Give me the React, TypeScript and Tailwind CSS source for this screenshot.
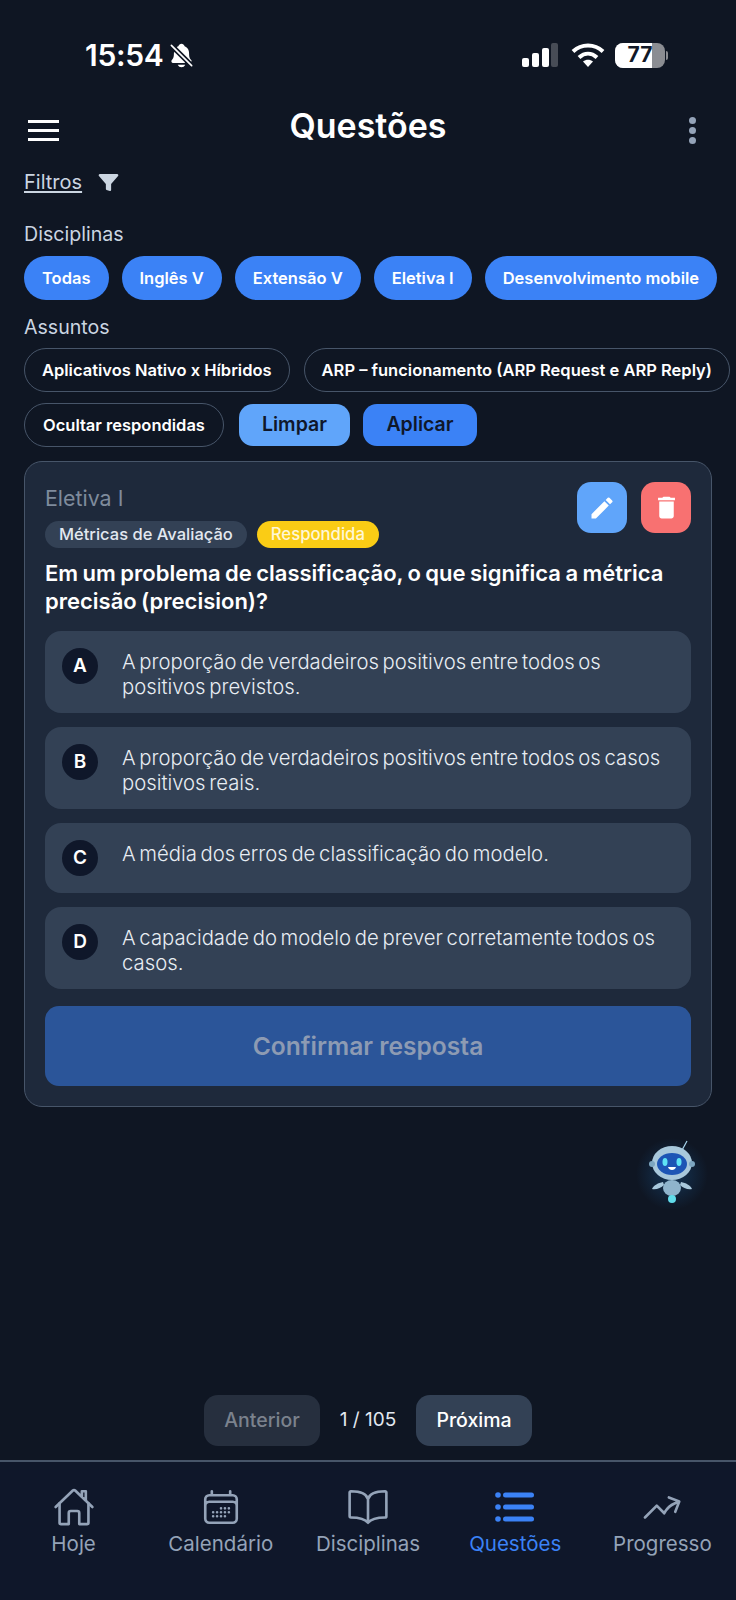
import React from 'react';
import { IoHomeOutline, IoBookOutline, IoFunnel, IoNotificationsOff } from 'react-icons/io5';
import { HiOutlineCalendarDays, HiArrowTrendingUp } from 'react-icons/hi2';
import { MdEdit, MdDelete } from 'react-icons/md';

const disciplinas = ['Todas', 'Inglês V', 'Extensão V', 'Eletiva I', 'Desenvolvimento mobile'];

const opcoes = [
  { letra: 'A', texto: 'A proporção de verdadeiros positivos entre todos os positivos previstos.', h: 'h-[82px]' },
  { letra: 'B', texto: 'A proporção de verdadeiros positivos entre todos os casos positivos reais.', h: 'h-[82px]' },
  { letra: 'C', texto: 'A média dos erros de classificação do modelo.', h: 'h-[70px]' },
  { letra: 'D', texto: 'A capacidade do modelo de prever corretamente todos os casos.', h: 'h-[82px]' },
];

const StatusBar = () => (
  <div className="h-[96px] pt-[38px] pl-[85px] pr-[68px] flex items-start justify-between text-white">
    <div className="flex items-center gap-[5px]">
      <span className="text-[30px] leading-[34px] font-semibold tracking-[-0.3px]">15:54</span>
      <IoNotificationsOff className="w-[27px] h-[27px]" />
    </div>
    <div className="flex items-center gap-[10px] h-[34px]">
      <svg className="mr-[3px]" width="37" height="24" viewBox="0 0 37 24">
        <rect x="1" y="15" width="7" height="9" rx="2" fill="#fff" />
        <rect x="11" y="10" width="7" height="14" rx="2" fill="#fff" />
        <rect x="21" y="5" width="7" height="19" rx="2" fill="#fff" />
        <rect x="30" y="0" width="7" height="24" rx="2" fill="#474c56" />
      </svg>
      <svg width="34" height="26" viewBox="0 0 34 26" fill="none" stroke="#fff" strokeWidth="4">
        <path d="M2 9.5C10.5 1.5 23.5 1.5 32 9.5" />
        <path d="M8 15.5C13.5 10.5 20.5 10.5 26 15.5" />
        <path d="M17 25l-5-5.5c3-2.4 7-2.4 10 0z" fill="#fff" stroke="none" />
      </svg>
      <div className="relative w-[50px] h-[25px] rounded-[8px] bg-[#8b8d92] overflow-hidden">
        <div className="h-full w-[37px] bg-white" />
        <span className="absolute inset-0 flex items-center justify-center text-[21px] font-bold text-[#111827]">77</span>
      </div>
      <div className="w-[2px] h-[9px] -ml-[9px] rounded-r bg-[#8b8d92]" />
    </div>
  </div>
);

const Header = () => (
  <div className="h-[60px] pl-[28px] pr-[40px] flex items-center justify-between relative">
    <div className="w-[31px] mt-[8px] flex flex-col gap-[6px]">
      <div className="h-[3px] bg-white" />
      <div className="h-[3px] bg-white" />
      <div className="h-[3px] bg-white" />
    </div>
    <h1 className="absolute left-0 right-0 text-center text-[34px] leading-[40px] font-semibold text-white">Questões</h1>
    <div className="mt-[8px] flex flex-col gap-[3px]">
      <div className="w-[7px] h-[7px] rounded-full bg-[#94a3b8]" />
      <div className="w-[7px] h-[7px] rounded-full bg-[#94a3b8]" />
      <div className="w-[7px] h-[7px] rounded-full bg-[#94a3b8]" />
    </div>
  </div>
);

const chipBase = 'h-[44px] flex items-center rounded-full text-white text-[16.5px] font-semibold';

const Filtros = () => (
  <div className="px-[24px]">
    <div className="flex items-center gap-[16px] h-[30px] mt-[11px]">
      <span className="text-[20px] text-[#cbd5e1] underline underline-offset-2">Filtros</span>
      <IoFunnel className="w-[21px] h-[21px] text-[#cbd5e1]" />
    </div>
    <p className="mt-[25px] text-[19.6px] leading-[24px] text-[#cbd5e1]">Disciplinas</p>
    <div className="mt-[10px] flex gap-[13px] whitespace-nowrap">
      {disciplinas.map((d) => (
        <span key={d} className={`${chipBase} px-[18px] bg-[#3b82f6]`}>{d}</span>
      ))}
    </div>
    <p className="mt-[15px] text-[19.6px] leading-[24px] text-[#cbd5e1]">Assuntos</p>
    <div className="mt-[9px] flex gap-[14px] whitespace-nowrap">
      <span className={`${chipBase} px-[17px] border border-[#475569]`}>Aplicativos Nativo x Híbridos</span>
      <span className={`${chipBase} px-[17px] border border-[#475569]`}>ARP – funcionamento (ARP Request e ARP Reply)</span>
    </div>
    <div className="mt-[11px] flex items-center gap-[15px] whitespace-nowrap">
      <span className={`${chipBase} px-[18px] border border-[#475569]`}>Ocultar respondidas</span>
      <button className="h-[42px] w-[111px] rounded-[14px] bg-[#60a5fa] text-[#0f172a] text-[19.5px] font-semibold">Limpar</button>
      <button className="h-[42px] w-[114px] -ml-[2px] rounded-[14px] bg-[#3b82f6] text-[#0f172a] text-[19.5px] font-semibold">Aplicar</button>
    </div>
  </div>
);

const QuestaoCard = () => (
  <div className="mx-[24px] mt-[14px] rounded-[18px] border border-[#475569] bg-[#1e293b] px-[20px] pt-[20px] pb-[20px]">
    <div className="flex justify-between">
      <div>
        <p className="mt-[1px] text-[21.4px] leading-[30px] text-[#7f8b9c]">Eletiva I</p>
        <div className="mt-[8px] flex gap-[10px]">
          <span className="h-[27px] px-[14px] flex items-center rounded-full bg-[#334155] text-[#e2e8f0] text-[16.5px] font-medium">Métricas de Avaliação</span>
          <span className="h-[27px] px-[14px] flex items-center rounded-full bg-[#facc15] text-[#fff7d6] text-[16.7px] font-medium">Respondida</span>
        </div>
      </div>
      <div className="flex gap-[14px]">
        <button className="w-[50px] h-[51px] rounded-[14px] bg-[#60a5fa] flex items-center justify-center"><MdEdit className="w-[28px] h-[28px] text-white" /></button>
        <button className="w-[50px] h-[51px] rounded-[14px] bg-[#f87171] flex items-center justify-center"><MdDelete className="w-[29px] h-[29px] text-white" /></button>
      </div>
    </div>
    <h2 className="mt-[11px] text-[22px] leading-[28px] font-semibold text-white [word-spacing:-1.1px]">Em um problema de classificação, o que significa a métrica precisão (precision)?</h2>
    <div className="mt-[16px] flex flex-col gap-[14px]">
      {opcoes.map((o) => (
        <div key={o.letra} className={`${o.h} rounded-[16px] bg-[#334155] pl-[17px] pr-[20px] pt-[17px] flex gap-[24px]`}>
          <span className="w-[36px] h-[36px] shrink-0 rounded-full bg-[#0f172a] text-white flex items-center justify-center text-[19px] font-semibold">{o.letra}</span>
          <p className="mt-[1px] text-[20.3px] leading-[25px] font-light text-[#e8edf3] [word-spacing:-2px]">{o.texto}</p>
        </div>
      ))}
    </div>
    <button className="mt-[17px] w-full h-[80px] rounded-[14px] bg-[#2b5599] text-[#8d9bb3] text-[24.6px] font-semibold">Confirmar resposta</button>
  </div>
);

const Robo = () => (
  <div className="absolute left-[632px] top-[1130px] w-[80px] h-[80px]">
    <svg width="80" height="80" viewBox="0 0 80 80">
      <defs>
        <radialGradient id="glow">
          <stop offset="0%" stopColor="#1d6fb8" stopOpacity="0.35" />
          <stop offset="100%" stopColor="#1d6fb8" stopOpacity="0" />
        </radialGradient>
      </defs>
      <circle cx="40" cy="44" r="36" fill="url(#glow)" />
      <path d="M49 22l6-11" stroke="#a9d6ee" strokeWidth="1.2" />
      <ellipse cx="40" cy="33" rx="20" ry="17" fill="#a8c8dc" />
      <circle cx="20" cy="34" r="3" fill="#7da6c0" />
      <circle cx="60" cy="34" r="3" fill="#7da6c0" />
      <ellipse cx="40" cy="34" rx="15" ry="11" fill="#1d55b5" />
      <ellipse cx="33" cy="32" rx="2.5" ry="4" fill="#5fe3f5" />
      <ellipse cx="47" cy="32" rx="2.5" ry="4" fill="#5fe3f5" />
      <path d="M36 37h8c-1 4-7 4-8 0z" fill="#fff" />
      <path d="M31 52c-5 1-9 3-11 7 4 1 9-1 12-4z" fill="#a8c8dc" />
      <path d="M49 52c5 1 9 3 11 7-4 1-9-1-12-4z" fill="#a8c8dc" />
      <ellipse cx="40" cy="58" rx="9" ry="8" fill="#8fb4cc" />
      <ellipse cx="40" cy="69" rx="4" ry="4" fill="#61dcea" />
    </svg>
  </div>
);

const Paginacao = () => (
  <div className="flex items-center justify-center h-[51px] mb-[14px]">
    <button className="w-[116px] h-[51px] rounded-[14px] bg-[#262f3e] text-[#7b828d] text-[19.5px] font-medium">Anterior</button>
    <span className="w-[96px] text-center text-[19px] text-[#e2e8f0]">1 / 105</span>
    <button className="w-[116px] h-[51px] rounded-[14px] bg-[#334155] text-white text-[19.5px] font-medium">Próxima</button>
  </div>
);

const IconeLista = ({ className }: { className?: string }) => (
  <svg className={className} viewBox="0 0 42 42" fill="currentColor">
    <circle cx="4" cy="9" r="2.8" />
    <circle cx="4" cy="21" r="2.8" />
    <circle cx="4" cy="33" r="2.8" />
    <rect x="9" y="6.5" width="31" height="5" rx="2.5" />
    <rect x="9" y="18.5" width="31" height="5" rx="2.5" />
    <rect x="9" y="30.5" width="31" height="5" rx="2.5" />
  </svg>
);

const BottomNav = () => {
  const itens = [
    { nome: 'Hoje', Icone: IoHomeOutline },
    { nome: 'Calendário', Icone: HiOutlineCalendarDays },
    { nome: 'Disciplinas', Icone: IoBookOutline },
    { nome: 'Questões', Icone: IconeLista, ativo: true },
    { nome: 'Progresso', Icone: HiArrowTrendingUp },
  ];
  return (
    <div className="h-[140px] border-t-2 border-[#475569] bg-[#0f172a] pt-[24px] grid grid-cols-5">
      {itens.map(({ nome, Icone, ativo }) => (
        <div key={nome} className={`flex flex-col items-center ${ativo ? 'text-[#3b82f6]' : 'text-[#94a3b8]'}`}>
          <Icone className="w-[42px] h-[42px]" />
          <span className="mt-[3px] text-[20.5px] leading-[26px]">{nome}</span>
        </div>
      ))}
    </div>
  );
};

export default function App() {
  return (
    <div className="relative w-[736px] h-[1600px] flex flex-col overflow-hidden bg-[#0f1623] font-['Inter',sans-serif]">
      <StatusBar />
      <Header />
      <Filtros />
      <QuestaoCard />
      <div className="flex-1" />
      <Paginacao />
      <BottomNav />
      <Robo />
    </div>
  );
}
